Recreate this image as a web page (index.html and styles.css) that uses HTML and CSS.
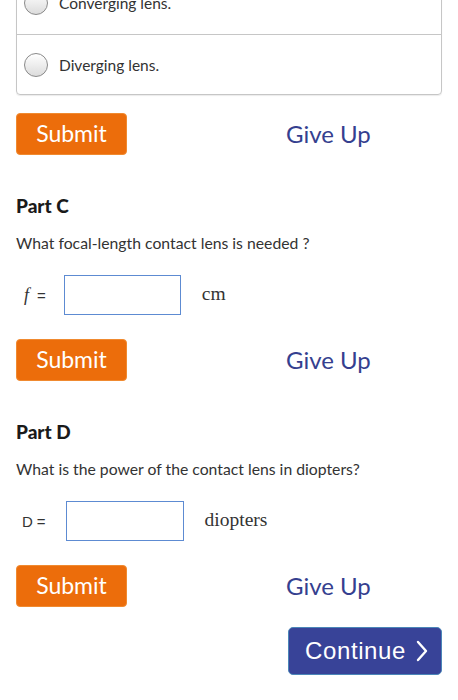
FILE: index.html
```html
<!DOCTYPE html>
<html>
<head>
<meta charset="utf-8">
<link rel="stylesheet" href="styles.css">
</head>
<body>
<div class="page">
  <div class="choices">
    <div class="choice first"><span class="radio"></span><span class="label">Converging lens.</span></div>
    <div class="choice"><span class="radio"></span><span class="label">Diverging lens.</span></div>
  </div>
  <div class="actions">
    <button class="submit">Submit</button>
    <span class="giveup">Give Up</span>
  </div>

  <h2 class="part">Part C</h2>
  <p class="question">What focal-length contact lens is needed ?</p>
  <div class="answer">
    <span class="var italic">f</span><span class="eq">=</span>
    <span class="box"></span>
    <span class="unit">cm</span>
  </div>
  <div class="actions">
    <button class="submit">Submit</button>
    <span class="giveup">Give Up</span>
  </div>

  <h2 class="part">Part D</h2>
  <p class="question">What is the power of the contact lens in diopters?</p>
  <div class="answer answer-d">
    <span class="var sans">D</span><span class="eq sans">=</span>
    <span class="box"></span>
    <span class="unit">diopters</span>
  </div>
  <div class="actions">
    <button class="submit">Submit</button>
    <span class="giveup">Give Up</span>
  </div>

  <div class="continue-row">
    <button class="continue"><span class="ctext">Continue</span><svg class="chev" width="14" height="22" viewBox="0 0 14 22"><path d="M3 2 L11 11 L3 20" fill="none" stroke="#ffffff" stroke-width="2.4" stroke-linecap="round" stroke-linejoin="round"/></svg></button>
  </div>
</div>
</body>
</html>
```

FILE: styles.css
```css
html, body {
  margin: 0;
  padding: 0;
  background: #ffffff;
}
body {
  font-family: Lato, "Open Sans", sans-serif;
  color: #333333;
  overflow: hidden;
}
.page {
  padding: 0 16px;
  margin-top: -30px;
}
.choices {
  border: 1px solid #c6c6c6;
  border-radius: 4px;
  box-shadow: 0 1px 1px rgba(0,0,0,0.08);
}
.choice {
  height: 59px;
  display: flex;
  align-items: center;
  padding-left: 7px;
}
.choice.first {
  height: 63px;
}
.choice + .choice {
  border-top: 1px solid #c6c6c6;
}
.radio {
  width: 22px;
  height: 22px;
  border-radius: 50%;
  border: 1px solid #8a8a8a;
  background: linear-gradient(#ffffff, #dcdcdc);
  flex: none;
}
.label {
  margin-left: 11px;
  font-size: 15.5px;
  color: #333;
}
.actions {
  display: flex;
  align-items: center;
  height: 42px;
  margin-top: 18px;
}
.submit {
  width: 111px;
  height: 42px;
  border: 1px solid #f08a30;
  border-radius: 4px;
  background: #ec6d0b;
  color: #ffffff;
  font-family: Lato, sans-serif;
  font-size: 23px;
  padding: 0 0 2px 0;
}
.giveup {
  margin-left: 159px;
  color: #353f8f;
  font-size: 24px;
  padding-bottom: 2px;
}
.part {
  margin: 41px 0 0 0;
  font-size: 19px;
  line-height: 20px;
  font-weight: 900;
  color: #1a1a1a;
}
.question {
  margin: 17px 0 0 0;
  font-size: 15.75px;
  line-height: 20px;
  color: #333;
}
.answer {
  display: flex;
  align-items: center;
  margin-top: 22px;
  height: 40px;
}
.var {
  margin-left: 8px;
  font-size: 15px;
}
.italic {
  font-family: "Liberation Serif", serif;
  font-style: italic;
  font-size: 18px;
}
.sans {
  font-family: "Liberation Sans", sans-serif;
  font-size: 14px;
  color: #333;
}
.eq {
  margin-left: 8px;
  font-family: "Liberation Sans", sans-serif;
  font-size: 15px;
}
.box {
  margin-left: 18px;
  width: 115px;
  height: 38px;
  border: 1px solid #5d8bd2;
  flex: none;
}
.answer-d .var { margin-left: 6px; font-size: 15px; }
.answer-d .eq { margin-left: 4px; }
.answer-d .box { margin-left: 20px; width: 116px; }
.unit {
  margin-left: 21px;
  font-family: "Liberation Serif", serif;
  font-size: 19.5px;
  color: #333;
  padding-bottom: 2px;
}
.answer + .actions {
  margin-top: 24px;
}
.continue-row {
  display: flex;
  justify-content: flex-end;
  margin-top: 20px;
}
.continue {
  width: 154px;
  height: 48px;
  border: 1px solid #4b86b8;
  border-radius: 5px;
  background: #384398;
  color: #ffffff;
  font-family: "Liberation Sans", Arial, sans-serif;
  font-size: 24px;
  letter-spacing: 0.6px;
  padding: 0 0 0 4px;
  display: flex;
  align-items: center;
  justify-content: center;
}
.ctext {
  margin-right: 9px;
}
.chev {
  display: block;
}
```
